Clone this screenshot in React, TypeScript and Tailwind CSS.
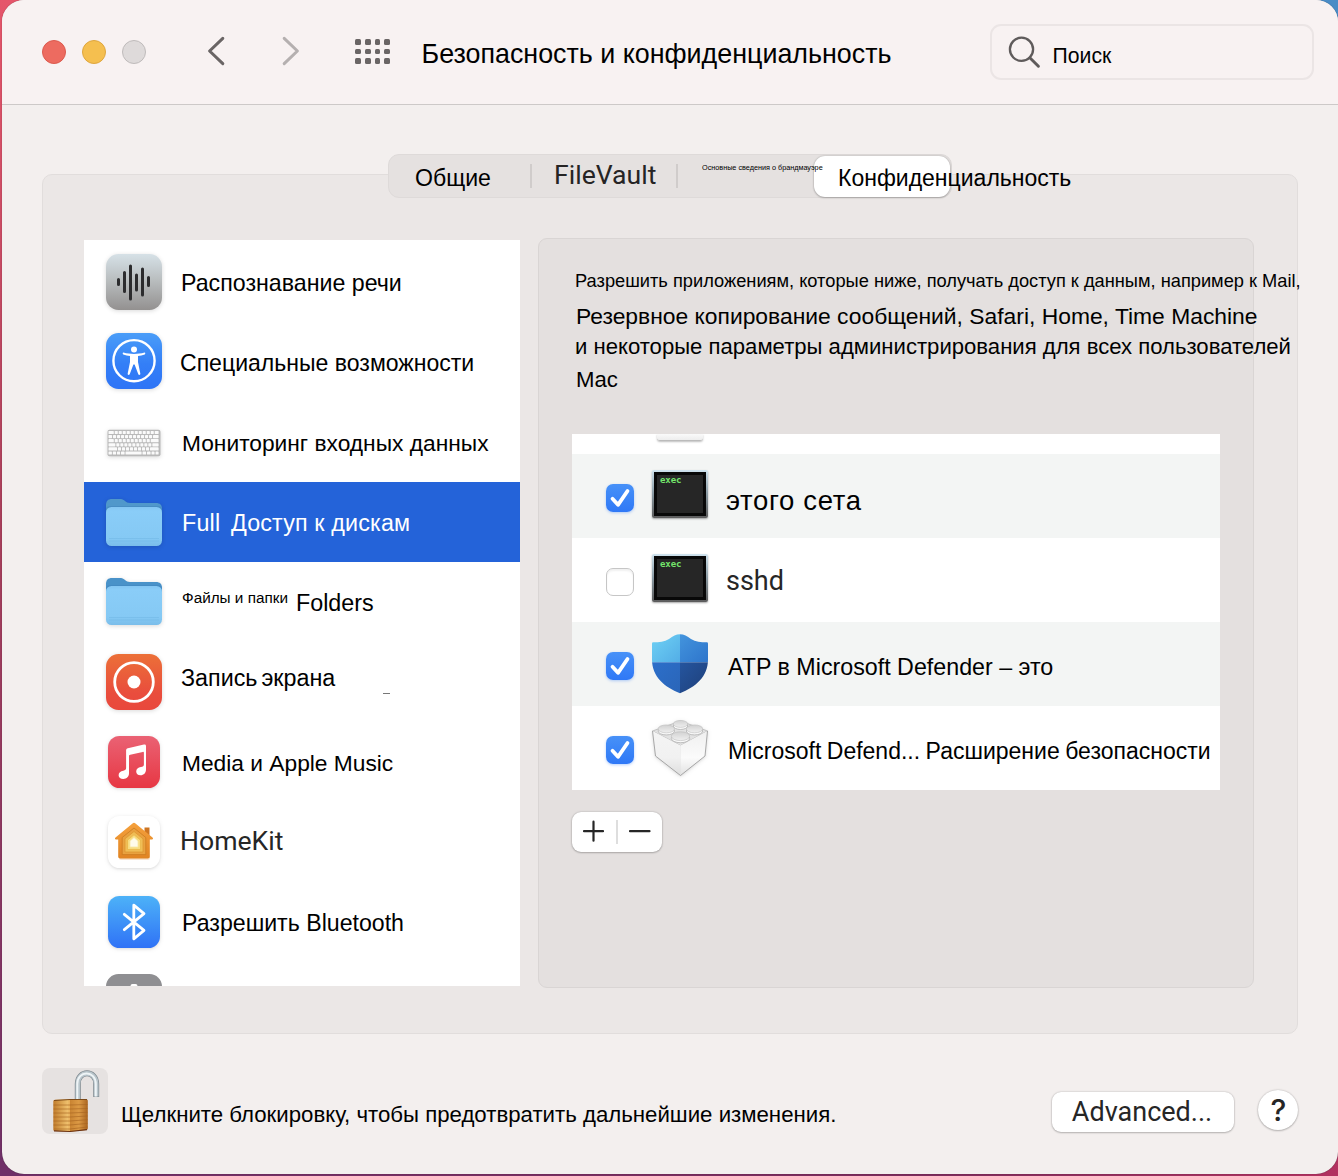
import React, { ReactNode } from "react";

const sans = "font-['Liberation_Sans',Arial,sans-serif]";

function SpeechIcon() {
  return (
    <svg width="56" height="56" viewBox="0 0 56 56" className="drop-shadow-sm">
      <defs>
        <linearGradient id="speech" x1="0" y1="0" x2="0" y2="1">
          <stop offset="0" stopColor="#d6e1e7" />
          <stop offset="0.5" stopColor="#b7bbbc" />
          <stop offset="1" stopColor="#939190" />
        </linearGradient>
      </defs>
      <rect width="56" height="56" rx="12.5" fill="url(#speech)" />
      <g stroke="#2c2c2e" strokeWidth="3" strokeLinecap="round">
        <path d="M12.5 25.500v5M18.5 18.500v19M24.5 12v33M30.5 21v15M36.500 15v26M42.5 23.500v8" />
      </g>
    </svg>
  );
}

function AccessibilityIcon() {
  return (
    <svg width="56" height="56" viewBox="0 0 56 56" className="drop-shadow-sm">
      <defs>
        <linearGradient id="access" x1="0" y1="0" x2="0" y2="1">
          <stop offset="0" stopColor="#4a9df8" />
          <stop offset="0.55" stopColor="#347ff7" />
          <stop offset="1" stopColor="#2e74f6" />
        </linearGradient>
      </defs>
      <rect width="56" height="56" rx="12.5" fill="url(#access)" />
      <circle cx="28" cy="27.700" r="20.600" fill="none" stroke="#fff" strokeWidth="2.400" />
      <circle cx="28" cy="16.500" r="3" fill="#fff" />
      <path
        d="M17.400 19.600c3.500 1 7 1.300 10.600 1.300s7.100-.3 10.600-1.300c.9 0 .9 1.500.1 1.800-2.200.9-4.500 1.300-6.700 1.500v6.200l2.300 11.400c.2 1.700-1.600 2-2.100.5L28.600 31.500h-1.200L23.800 41c-.6 1.500-2.400 1.200-2.100-.5L24 29.100v-6.200c-2.200-.2-4.500-.6-6.700-1.500-.8-.3-.8-1.800.1-1.800z"
        fill="#fff"
      />
    </svg>
  );
}

function KeyboardIcon() {
  const rows = [
    [0, 6.2, 10.2, 14.2, 18.2, 22.2, 26.2, 30.2, 34.2, 38.2, 42.2, 46.2, 51],
    [0, 4.5, 8.5, 12.5, 16.5, 20.5, 24.5, 28.5, 32.5, 36.5, 40.5, 44.5, 51],
    [0, 6.2, 10.2, 14.2, 18.2, 22.2, 26.2, 30.2, 34.2, 38.2, 42.2, 51],
    [0, 7.8, 11.8, 15.8, 19.8, 23.8, 27.8, 31.8, 35.8, 39.8, 43.8, 51],
    [0, 9.5, 13.5, 17.5, 21.5, 25.5, 29.5, 33.5, 37.5, 41.5, 51],
    [0, 4.3, 8.5, 12.5, 17, 34, 38.5, 43, 47, 51],
  ];
  return (
    <svg width="56" height="28" viewBox="0 0 56 28" className="drop-shadow-sm">
      <rect x="1.5" y="0.8" width="53" height="26.4" rx="2" fill="#b9b9b9" />
      {rows.map((row, r) =>
        row.slice(0, -1).map((x, i) => (
          <rect
            key={`${r}-${i}`}
            x={2.5 + x}
            y={1.9 + r * 4.1}
            width={row[i + 1] - x - 0.9}
            height="3.2"
            rx="0.6"
            fill="#fafafa"
          />
        ))
      )}
    </svg>
  );
}

function FolderIcon({ dim = false }: { dim?: boolean }) {
  return (
    <svg width="56" height="48" viewBox="0 0 56 48" className="overflow-visible drop-shadow-sm">
      <defs>
        <linearGradient id="folderFront" x1="0" y1="0" x2="0" y2="1">
          <stop offset="0" stopColor="#82c5f2" />
          <stop offset="0.1" stopColor="#8acdf8" />
          <stop offset="0.8" stopColor="#85c9f4" />
          <stop offset="1" stopColor="#7abdea" />
        </linearGradient>
      </defs>
      <path
        d="M0 6C0 2 2 0 6 0h9c3.200 0 4.500 4 9 4h26c4 0 6 2 6 6v12H0z"
        fill={dim ? "#5098cb" : "#4992c9"}
      />
      <path d="M0 14V10c0-2 2-3 5-3h46c3 0 5 1 5 3v4z" fill="#3f85bd" opacity=".55" />
      <rect y="8" width="56" height="39" rx="5.5" fill="url(#folderFront)" />
      <path d="M3 39.500h50M3 42h50" stroke="#72b8e6" strokeWidth=".6" />
    </svg>
  );
}

function RecordIcon() {
  return (
    <svg width="56" height="56" viewBox="0 0 56 56" className="drop-shadow-sm">
      <defs>
        <linearGradient id="record" x1="0" y1="0" x2="0" y2="1">
          <stop offset="0" stopColor="#ec7038" />
          <stop offset="0.7" stopColor="#e94d3d" />
          <stop offset="1" stopColor="#e9483c" />
        </linearGradient>
      </defs>
      <rect width="56" height="56" rx="12.5" fill="url(#record)" />
      <circle cx="28" cy="28" r="19.300" fill="none" stroke="#fff" strokeWidth="2.800" />
      <circle cx="28" cy="28" r="6.5" fill="#fff" />
    </svg>
  );
}

function MusicIcon() {
  return (
    <svg width="52" height="52" viewBox="0 0 52 52" className="drop-shadow">
      <defs>
        <linearGradient id="music" x1="0" y1="0" x2="0" y2="1">
          <stop offset="0" stopColor="#ea6274" />
          <stop offset="1" stopColor="#e73743" />
        </linearGradient>
      </defs>
      <rect width="52" height="52" rx="11.5" fill="url(#music)" />
      <path
        d="M18.100 14.500c0-1.300.6-2 1.800-2.300l16-3.700c1.400-.3 2.100.2 2.100 1.500v23.500c0 3.300-2.200 5.800-5.600 5.800-2.600 0-4.200-1.500-4.200-3.700 0-2.500 1.900-3.900 4.700-4.500 2-.4 3-.7 3-2.500V16.800c0-.8-.4-1.100-1.200-.9l-12.500 2.800c-.9.2-1.200.5-1.200 1.400v17.200c0 3.300-2.300 5.700-5.700 5.700-2.700 0-4.700-1.500-4.700-3.800 0-2.500 1.900-3.900 4.700-4.500 2-.4 2.800-.8 2.800-2.600z"
        fill="#fff"
      />
    </svg>
  );
}

function HomeIcon() {
  return (
    <svg width="52" height="52" viewBox="0 0 52 52" className="drop-shadow">
      <defs>
        <linearGradient id="home" x1="0" y1="0" x2="0" y2="1">
          <stop offset="0" stopColor="#f5a13d" />
          <stop offset="1" stopColor="#e08423" />
        </linearGradient>
      </defs>
      <rect width="52" height="52" rx="11.5" fill="#fff" />
      <rect x="11" y="40" width="31" height="4" rx="2" fill="#f8e4d0" />
      <path d="M36.500 11.500h5v9h-5z" fill="#cd7522" />
      <path
        d="M24.500 7.400c1-.9 2-.9 3 0l17 14c1 .9.600 2-.5 2h-2.200v17.200c0 1.300-.7 2-2 2H12.200c-1.300 0-2-.7-2-2V23.400H8c-1.100 0-1.500-1.100-.5-2z"
        fill="url(#home)"
      />
      <path d="M26 12 37.800 21.500V38.600H14.200V21.500z" fill="#e9a13f" stroke="#cc7b20" strokeWidth=".8" />
      <path d="M26 15.500 35 22.800V36H17V22.800z" fill="#f0bd56" stroke="#db942c" strokeWidth=".7" />
      <path d="M26 18.800 32.500 24.100V33.500h-13V24.100z" fill="#f8dc80" stroke="#e8b545" strokeWidth=".7" />
      <path d="M26 21.500 30 25v6h-8v-6z" fill="#fffbea" stroke="#f7e8a5" strokeWidth=".8" />
    </svg>
  );
}

function BluetoothIcon() {
  return (
    <svg width="52" height="52" viewBox="0 0 52 52" className="drop-shadow">
      <defs>
        <linearGradient id="bt" x1="0" y1="0" x2="0" y2="1">
          <stop offset="0" stopColor="#4db2f8" />
          <stop offset="1" stopColor="#2f72f6" />
        </linearGradient>
      </defs>
      <rect width="52" height="52" rx="11.5" fill="url(#bt)" />
      <path
        d="M16.300 18.300 36 34.300 25.800 42.800V9.200L36 17.700 16.300 33.700"
        fill="none"
        stroke="#fff"
        strokeWidth="2.800"
        strokeLinejoin="round"
        strokeLinecap="round"
      />
    </svg>
  );
}

function PartialIcon() {
  return (
    <svg width="56" height="56" viewBox="0 0 56 56">
      <rect width="56" height="56" rx="12.5" fill="#8f8f92" />
      <rect x="24.5" y="10" width="7" height="6" rx="2" fill="#fff" />
    </svg>
  );
}

function ExecIcon() {
  return (
    <div className="h-12 w-14 rounded-[2px] bg-linear-to-b from-[#cfe3ee] via-[#8a9aa3] to-[#5c5c5c] p-[2px] shadow-[0_1px_2px_rgba(0,0,0,0.35)]">
      <div className="h-full w-full border-[3px] border-[#080808] bg-[#262626] pl-[3px] font-['DejaVu_Sans_Mono',monospace] text-[9px] leading-[10px] font-bold tracking-[-0.1px] text-[#74e56c]">
        exec
      </div>
    </div>
  );
}

function ShieldIcon() {
  return (
    <svg width="56" height="60" viewBox="0 0 56 60">
      <defs>
        <clipPath id="shieldClip">
          <path d="M28 .3c4 0 7 2 11 4.700 4.500 2.900 10 3.300 15.500 3.300.9 0 1.500.5 1.500 1.400v15.800C56 43 43.500 53 28 59.300 12.500 53 0 43 0 25.500V9.700c0-.9.600-1.400 1.500-1.400C7 8.300 12.500 7.900 17 5 21 2.300 24 .3 28 .3z" />
        </clipPath>
        <linearGradient id="s1" x1="0" y1="0" x2="1" y2="1">
          <stop offset="0" stopColor="#6fd2f5" />
          <stop offset="1" stopColor="#53ade6" />
        </linearGradient>
        <linearGradient id="s2" x1="0" y1="0" x2="1" y2="1">
          <stop offset="0" stopColor="#4394dd" />
          <stop offset="1" stopColor="#2e75cb" />
        </linearGradient>
        <linearGradient id="s3" x1="0" y1="0" x2="1" y2="1">
          <stop offset="0" stopColor="#2c6fca" />
          <stop offset="1" stopColor="#2a65b8" />
        </linearGradient>
        <linearGradient id="s4" x1="0" y1="0" x2="1" y2="1">
          <stop offset="0" stopColor="#25559f" />
          <stop offset="1" stopColor="#1e3f78" />
        </linearGradient>
      </defs>
      <g clipPath="url(#shieldClip)">
        <rect width="28" height="28.3" fill="url(#s1)" />
        <rect x="28" width="28" height="28.3" fill="url(#s2)" />
        <rect y="28.3" width="28" height="32" fill="url(#s3)" />
        <rect x="28" y="28.3" width="28" height="32" fill="url(#s4)" />
      </g>
    </svg>
  );
}

function BrickIcon() {
  const studs = [
    [28.5, 4.2, 7.2],
    [14.3, 9.2, 8.2],
    [42.5, 9.2, 8.2],
    [28.5, 16.5, 9.2],
  ];
  return (
    <svg width="56" height="56" viewBox="0 0 56 56" className="overflow-visible drop-shadow">
      <defs>
        <linearGradient id="brickL" x1="0" y1="0" x2="0" y2="1">
          <stop offset="0" stopColor="#f4f4f4" />
          <stop offset="0.6" stopColor="#f1f1f1" />
          <stop offset="1" stopColor="#dedede" />
        </linearGradient>
        <linearGradient id="brickR" x1="0" y1="0" x2="0" y2="1">
          <stop offset="0" stopColor="#efefef" />
          <stop offset="0.6" stopColor="#fbfbfb" />
          <stop offset="1" stopColor="#e2e2e2" />
        </linearGradient>
        <linearGradient id="stud" x1="0" y1="0" x2="0" y2="1">
          <stop offset="0" stopColor="#d2d2d2" />
          <stop offset="1" stopColor="#efefef" />
        </linearGradient>
      </defs>
      <path d="M.5 11 28.500 1 55.500 11 28.500 25.500z" fill="#e2e2e2" stroke="#b5b5b5" strokeWidth=".8" />
      <path d="M.5 11 28.500 25.500V55.500L3.500 36z" fill="url(#brickL)" />
      <path d="M55.500 11 28.500 25.500V55.500L53 36z" fill="url(#brickR)" />
      <path d="M.5 11 3.500 36 28.500 55.500 53 36 55.500 11" fill="none" stroke="#949494" strokeWidth=".8" />
      {studs.map(([x, y, r]) => (
        <g key={`${x}-${y}`}>
          <ellipse cx={x} cy={y + 1.8} rx={r} ry={r * 0.48} fill="#fafafa" stroke="#a8a8a8" strokeWidth=".7" />
          <ellipse cx={x} cy={y - 0.3} rx={r} ry={r * 0.48} fill="url(#stud)" stroke="#bcbcbc" strokeWidth=".6" />
        </g>
      ))}
    </svg>
  );
}

function LockIcon() {
  return (
    <svg width="66" height="66" viewBox="0 0 66 66">
      <defs>
        <linearGradient id="brassL" x1="0" x2="1" y1="0" y2="0">
          <stop offset="0" stopColor="#c07c2c" />
          <stop offset="0.8" stopColor="#eebf6c" />
          <stop offset="1" stopColor="#e5a853" />
        </linearGradient>
        <linearGradient id="brassR" x1="0" x2="1" y1="0" y2="0">
          <stop offset="0" stopColor="#c98432" />
          <stop offset="0.5" stopColor="#dc9a45" />
          <stop offset="1" stopColor="#a9641f" />
        </linearGradient>
      </defs>
      <g fill="none">
        <path d="M35.800 33V16C35.800 1.800 54.200 1.800 54.200 16v13" stroke="#7f898f" strokeWidth="6" />
        <path d="M35.800 33V16C35.800 1.800 54.200 1.800 54.200 16v12.500" stroke="#b9c5cb" strokeWidth="4.600" />
        <path d="M35.300 33V16C35.300 2 53.800 2 53.800 16v12.500" stroke="#eef4f6" strokeWidth="2" />
      </g>
      <path d="M11.300 33.500c0-1.200.7-1.700 2-1.800l15.700-.4v32.500l-15.700-.8c-1.300 0-2-.6-2-1.600z" fill="url(#brassL)" />
      <path d="M28 31.300h15.800c1.300 0 2 .5 2 1.600v27.300c0 1-.7 1.500-1.800 1.700L28 63.800z" fill="url(#brassR)" />
      <g stroke="#a5621f" strokeWidth="1" opacity=".6">
        <path d="M11.500 37H28l17.600-.5M11.500 41H28l17.600-.5M11.500 45H28l17.600-.7M11.500 49H28l17.600-1M11.500 53H28l17.600-1.300M11.500 57H28l17.600-1.600M12 61H28l17.600-2" fill="none" />
      </g>
      <path d="M12 32.500 28 31.500h17" stroke="#7c4a18" strokeWidth="1" fill="none" />
      <path d="M12 62.800 28 63.500l17-1.800" stroke="#6b3212" strokeWidth="1.200" fill="none" />
    </svg>
  );
}

function Checkbox({ checked }: { checked: boolean }) {
  if (!checked) {
    return (
      <div className="h-7 w-7 rounded-[7px] border border-[#c6c6c6] bg-white shadow-[inset_0_2px_2px_rgba(0,0,0,0.06)]" />
    );
  }
  return (
    <div className="h-7 w-7 rounded-[7px] bg-linear-to-b from-[#4791f8] to-[#2f78f6] shadow-[0_1px_3px_rgba(47,120,246,0.35)]">
      <svg width="28" height="28" viewBox="0 0 28 28">
        <path
          d="M6.500 14.800 12 20.800 21.500 7"
          fill="none"
          stroke="#fff"
          strokeWidth="3.800"
          strokeLinecap="round"
          strokeLinejoin="round"
        />
      </svg>
    </div>
  );
}

function SidebarRow({ icon, children, selected = false }: { icon: ReactNode; children: ReactNode; selected?: boolean }) {
  return (
    <div
      className={
        "flex h-20 shrink-0 items-center whitespace-pre pl-[22px] leading-7 " +
        (selected ? "bg-[#2463d9] text-white" : "text-black")
      }
    >
      <div className="flex w-14 shrink-0 justify-center">{icon}</div>
      <div className="flex pl-5">{children}</div>
    </div>
  );
}

function AppRow({ icon, checked, shaded = false, children }: { icon: ReactNode; checked: boolean; shaded?: boolean; children: ReactNode }) {
  return (
    <div className={"flex h-[84px] shrink-0 items-center whitespace-nowrap pl-[34px] " + (shaded ? "bg-[#f3f5f4]" : "bg-white")}>
      <div className="mt-1">
        <Checkbox checked={checked} />
      </div>
      <div className="ml-[18px] flex w-14 shrink-0 justify-center">{icon}</div>
      <div className="pl-[18px]">{children}</div>
    </div>
  );
}

function Toolbar() {
  return (
    <header className="flex h-[105px] shrink-0 items-start border-b border-[#cdc9c8] bg-[#f8f2f2]">
      <div className="flex gap-4 pt-10 pl-10">
        <div className="h-6 w-6 rounded-full border border-[#dc5a4e] bg-[#ed6b60]" />
        <div className="h-6 w-6 rounded-full border border-[#dfa63e] bg-[#f5bf4f]" />
        <div className="h-6 w-6 rounded-full border border-[#bfbbbb] bg-[#dedada]" />
      </div>
      <svg width="18" height="30" viewBox="0 0 18 30" className="mt-9 ml-[61px]" fill="none">
        <path d="M15.800 2.300 2.600 15l13.200 12.700" stroke="#6a6565" strokeWidth="3" strokeLinecap="round" strokeLinejoin="round" />
      </svg>
      <svg width="18" height="30" viewBox="0 0 18 30" className="mt-9 ml-[57px]" fill="none">
        <path d="M2.200 2.300 15.400 15 2.200 27.700" stroke="#b5b0b0" strokeWidth="3" strokeLinecap="round" strokeLinejoin="round" />
      </svg>
      <div className="mt-[39px] ml-[55px] grid grid-cols-4 gap-x-1 gap-y-1">
        {Array.from({ length: 12 }, (_, i) => (
          <div key={i} className="h-[5.7px] w-[5.8px] rounded-[1.5px] bg-[#6a6565]" />
        ))}
      </div>
      <h1 className="mt-[38px] ml-[31.4px] w-[568px] text-[26.85px] leading-8 whitespace-nowrap text-black">
        Безопасность и конфиденциальность
      </h1>
      <div className="mt-6 flex h-14 w-[324px] shrink-0 items-center rounded-[11px] border-2 border-[#ebe5e5] pl-4">
        <svg width="34" height="34" viewBox="0 0 34 34" fill="none" stroke="#5f5b5b">
          <circle cx="13.5" cy="14.3" r="11.6" strokeWidth="2.300" />
          <path d="m21.800 22.800 8.600 8.400" strokeWidth="3" strokeLinecap="round" />
        </svg>
        <span className="mt-[7px] pl-[11px] text-[21.2px] leading-7 text-black">Поиск</span>
      </div>
    </header>
  );
}

function Tabs() {
  return (
    <nav className="absolute top-[-21px] left-[345px] flex h-[44px] w-[564px] rounded-[11px] border border-[#dedad9] bg-[#e5e1e0] whitespace-nowrap text-black">
      <span className="w-[141px] pt-[9px] pl-[26px] text-[23.1px] leading-7">Общие</span>
      <span className="mt-[9px] h-6 w-[2px] bg-[#d0cccb]" />
      <span className="w-[144px] pt-[6px] pl-[22px] font-['Roboto',sans-serif] text-[26.6px] leading-7 text-[#262424]">
        FileVault
      </span>
      <span className="mt-[9px] h-6 w-[2px] bg-[#d0cccb]" />
      <span className="z-10 w-[136px] pt-2 pl-[24px] text-[7.25px] leading-[10px]">Основные сведения о брандмауэре</span>
      <span className="mt-px h-[41px] w-[136px] rounded-[11px] bg-white pt-2 pl-[24px] text-[23px] leading-7 shadow-[0_0_2px_rgba(0,0,0,0.25),0_1px_2px_rgba(0,0,0,0.2)]">
        Конфиденциальность
      </span>
    </nav>
  );
}

function Sidebar() {
  return (
    <aside className="flex h-[746px] w-[436px] flex-col overflow-hidden bg-white pt-[2px]">
      <SidebarRow icon={<SpeechIcon />}>
        <span className="mt-[2px] -ml-px text-[23.2px]">Распознавание речи</span>
      </SidebarRow>
      <SidebarRow icon={<div className="-mt-[2px]"><AccessibilityIcon /></div>}>
        <span className="mt-[2px] -ml-[2px] text-[23.05px]">Специальные возможности</span>
      </SidebarRow>
      <SidebarRow icon={<div className="mt-[2px]"><KeyboardIcon /></div>}>
        <span className="mt-[2px] text-[22.75px]">Мониторинг входных данных</span>
      </SidebarRow>
      <SidebarRow selected icon={<div className="mt-[2px]"><FolderIcon dim /></div>}>
        <span className="mt-[2px] w-[49px] text-[23.3px] tracking-[0.2px]">Full</span>
        <span className="mt-[2px] text-[23.3px] tracking-[0.15px]">Доступ к дискам</span>
      </SidebarRow>
      <SidebarRow icon={<FolderIcon />}>
        <span className="mt-[-3px] w-[114px] text-[15.3px]">Файлы и папки</span>
        <span className="mt-[2px] text-[23.3px]">Folders</span>
      </SidebarRow>
      <SidebarRow icon={<RecordIcon />}>
        <span className="-mt-[6px] -ml-px w-[202px] text-[23.3px] [word-spacing:-2.5px]">Запись экрана</span>
        <span className="mt-[23px] h-px w-[7px] bg-[#777]" />
      </SidebarRow>
      <SidebarRow icon={<MusicIcon />}>
        <span className="mt-[2px] text-[22.75px]">Media и Apple Music</span>
      </SidebarRow>
      <SidebarRow icon={<HomeIcon />}>
        <span className="-mt-[3px] -ml-[2px] font-['Roboto',sans-serif] text-[26.6px] text-[#262626]">HomeKit</span>
      </SidebarRow>
      <SidebarRow icon={<BluetoothIcon />}>
        <span className="mt-[2px] text-[23.15px]">Разрешить Bluetooth</span>
      </SidebarRow>
      <SidebarRow icon={<PartialIcon />}>{null}</SidebarRow>
    </aside>
  );
}

function Details() {
  return (
    <section className="ml-[18px] h-[750px] w-[716px] rounded-[9px] border border-[#d9d5d4] bg-[#e4e0df] pt-px pl-[33px] whitespace-nowrap text-black">
      <div className="flex h-[194px] flex-col pt-[25px] pl-[3px]">
        <p className="text-[18.25px] leading-8">Разрешить приложениям, которые ниже, получать доступ к данным, например к Mail,</p>
        <p className="mt-[3px] pl-px text-[22.85px] leading-8">Резервное копирование сообщений, Safari, Home, Time Machine</p>
        <p className="-mt-px text-[22.12px] leading-8">и некоторые параметры администрирования для всех пользователей</p>
        <p className="mt-[1px] pl-px text-[22.2px] leading-8">Mac</p>
      </div>
      <div className="flex h-[356px] w-[648px] flex-col overflow-hidden bg-white">
        <div className="h-5 shrink-0 pl-[85px]">
          <div className="h-[7px] w-[46px] rounded-b-[3px] border-b border-[#bbb] bg-linear-to-b from-[#fafafa] to-[#ededed] shadow-[0_1px_2px_rgba(0,0,0,0.25)]" />
        </div>
        <AppRow shaded checked icon={<div className="-mt-[4px]"><ExecIcon /></div>}>
          <div className="mt-[9px] text-[27.5px] tracking-[0.65px]">этого сета</div>
        </AppRow>
        <AppRow checked={false} icon={<div className="-mt-[4px]"><ExecIcon /></div>}>
          <div className="mt-[2px] font-['Roboto',sans-serif] text-[27px] text-[#262626]">sshd</div>
        </AppRow>
        <AppRow shaded checked icon={<ShieldIcon />}>
          <div className="mt-[7px] ml-[2px] text-[23.25px]">ATP в Microsoft Defender – это</div>
        </AppRow>
        <AppRow checked icon={<BrickIcon />}>
          <div className="mt-[7px] ml-[2px] text-[23px] [word-spacing:-0.9px]">Microsoft Defend... Расширение безопасности</div>
        </AppRow>
      </div>
      <div className="mt-[22px] flex h-10 w-[90px] items-center rounded-[9px] bg-white shadow-[0_0_2px_rgba(0,0,0,0.25),0_1px_2px_rgba(0,0,0,0.2)]">
        <svg width="90" height="40" viewBox="0 0 90 40" fill="none">
          <path d="M12 19.200h19M21.500 9.700v19M58 19.200h19.500" stroke="#262626" strokeWidth="2.200" strokeLinecap="round" />
          <path d="M45 8v24" stroke="#dedede" strokeWidth="2" />
        </svg>
      </div>
    </section>
  );
}

export default function App() {
  return (
    <div className="h-[1176px] w-[1338px] overflow-hidden bg-[linear-gradient(90deg,transparent_60%,#4a8cc6_99%),linear-gradient(180deg,#e5566b_0%,#a83f5b_45%,#703068_100%)] pl-[2px]">
      <div className="-mb-[1176px] -ml-[2px] h-full bg-[linear-gradient(90deg,#703068_0%,#7d2c5b_70%,#b23260_100%)] [clip-path:inset(1150px_0_0_-2px)]" />
      <div className={"relative flex h-[1174px] w-[1336px] flex-col overflow-hidden rounded-[22px] bg-[#f3efee] shadow-[0_0_1px_rgba(0,0,0,0.6)] " + sans}>
        <Toolbar />
        <main className="relative mt-[69px] ml-10 flex h-[860px] w-[1256px] shrink-0 items-start rounded-[10px] border border-[#e1dddc] bg-[#ebe7e6] pl-[41px]">
          <Tabs />
          <div className="mt-[65px]">
            <Sidebar />
          </div>
          <div className="mt-[63px]">
            <Details />
          </div>
        </main>
        <footer className="flex items-start pt-[34px] pl-10">
          <div className="h-[66px] w-[66px] rounded-lg bg-[#e6e2e1]">
            <LockIcon />
          </div>
          <p className="mt-[33px] ml-[13px] w-[931px] text-[22.22px] leading-7 whitespace-nowrap text-black">
            Щелкните блокировку, чтобы предотвратить дальнейшие изменения.
          </p>
          <button className="mt-6 h-10 w-[182px] rounded-[9px] bg-white pr-[2px] font-['Roboto',sans-serif] text-[27px] leading-[39px] text-[#262626] shadow-[0_0_2px_rgba(0,0,0,0.25),0_1px_2px_rgba(0,0,0,0.2)]">
            Advanced...
          </button>
          <button className="mt-[22px] ml-6 h-10 w-10 rounded-full bg-white pl-px font-['Inter',sans-serif] text-[30px] leading-10 font-medium text-[#262626] shadow-[0_0_2px_rgba(0,0,0,0.25),0_1px_2px_rgba(0,0,0,0.2)]">
            ?
          </button>
        </footer>
      </div>
    </div>
  );
}
